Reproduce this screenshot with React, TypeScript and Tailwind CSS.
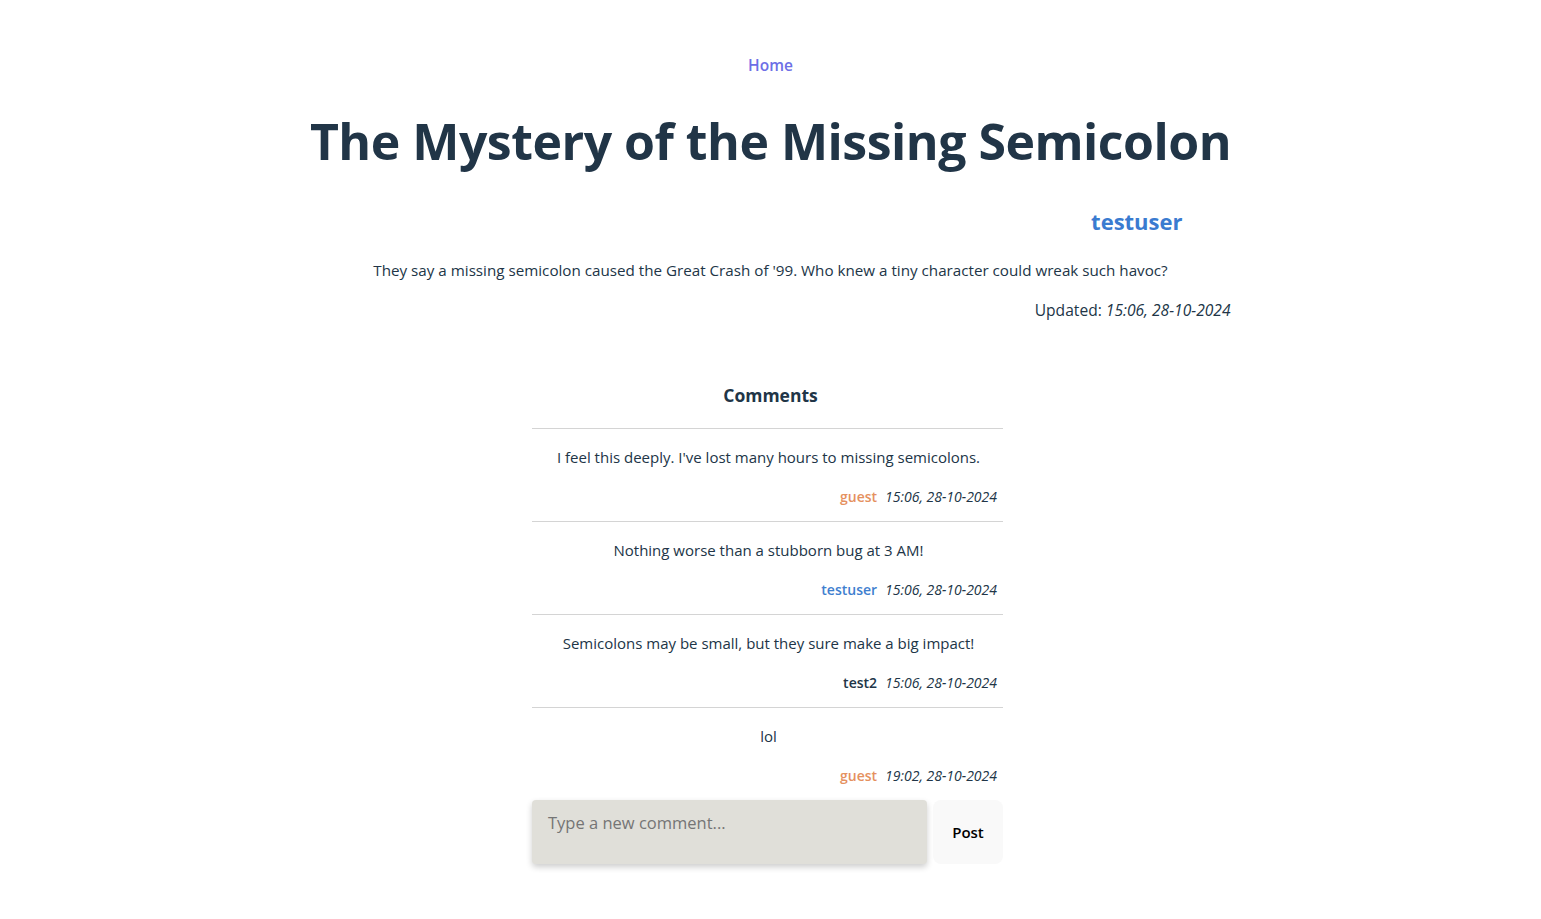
import React from "react";

const comments = [
  { text: "I feel this deeply. I've lost many hours to missing semicolons.", user: "guest", time: "15:06, 28-10-2024", color: "text-[#e5915f]" },
  { text: "Nothing worse than a stubborn bug at 3 AM!", user: "testuser", time: "15:06, 28-10-2024", color: "text-[#3f80cf]" },
  { text: "Semicolons may be small, but they sure make a big impact!", user: "test2", time: "15:06, 28-10-2024", color: "text-[#213547]" },
  { text: "lol", user: "guest", time: "19:02, 28-10-2024", color: "text-[#e5915f]" },
];

export default function App() {
  return (
    <div className="min-h-screen bg-white text-[#213547] font-['Open_Sans','Noto_Sans',sans-serif]">
      <div className="mx-auto flex w-[920px] flex-col items-center pt-[53px]">
        <a className="h-6 text-[15.5px] font-semibold leading-6 text-[#6d6fe6]">Home</a>
        <h1 className="mt-[28px] h-[72px] whitespace-nowrap text-[50px] font-bold leading-[72px] tracking-[-0.5px]">
          The Mystery of the Missing Semicolon
        </h1>
        <div className="mt-[28px] flex w-full justify-end pr-[48px]">
          <span className="h-8 text-[22px] font-bold leading-8 text-[#3a7bd0]">testuser</span>
        </div>
        <p className="mt-[21px] h-6 whitespace-nowrap text-[15.2px] leading-6">
          They say a missing semicolon caused the Great Crash of '99. Who knew a tiny character could wreak such havoc?
        </p>
        <div className="mt-[16px] flex h-6 w-full justify-end text-[15.6px] leading-6">
          <span>Updated:&nbsp;</span>
          <em>15:06, 28-10-2024</em>
        </div>
        <div className="mr-[6px] mt-[57px] flex w-[471px] flex-col">
          <h2 className="h-8 pl-[6px] text-center text-[17.5px] font-bold leading-8">Comments</h2>
          <div className="mt-[17px] border-t border-[#d4d4d4]" />
          {comments.map((c, i) => (
            <div
              key={i}
              className={`flex flex-col ${i < comments.length - 1 ? "border-b border-[#d4d4d4]" : ""}`}
            >
              <p className="mt-[16px] h-6 pl-[2px] text-center text-[15px] leading-6">{c.text}</p>
              <div className="mb-[15px] mt-[17px] flex h-5 items-center justify-end gap-2 pr-[6px] text-[14px]">
                <span className={`font-semibold ${c.color}`}>{c.user}</span>
                <em>{c.time}</em>
              </div>
            </div>
          ))}
          <div className="flex gap-[6px]">
            <textarea
              placeholder="Type a new comment..."
              className="h-16 w-[395px] resize-none rounded-[4px] bg-[#e0dfd9] px-4 pb-3 pt-[11px] text-[16.5px] leading-6 text-[#213547] shadow-[0_3px_6px_rgba(0,0,0,0.2)] outline-none placeholder:text-[#757575]"
            />
            <button className="h-16 flex-1 rounded-lg bg-[#f9f9f9] text-[15px] font-semibold text-black">Post</button>
          </div>
        </div>
      </div>
    </div>
  );
}
